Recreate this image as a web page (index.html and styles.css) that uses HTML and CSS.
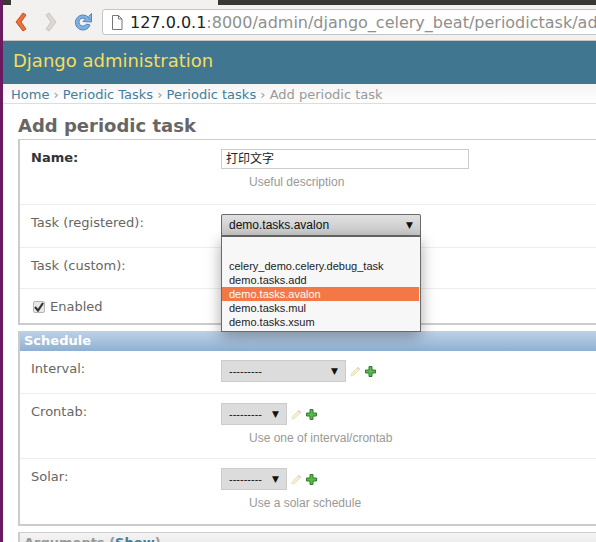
FILE: index.html
```html
<!doctype html>
<html>
  <head>
    <meta charset="utf-8">
    <title>Add periodic task | Django site admin</title>
    <link rel="stylesheet" href="styles.css">
  </head>
  <body>
    <div class="launcher"></div>
    <div class="window">
      <div class="tabstrip"><div class="tab"></div></div>
      <div class="toolbar">
        <svg class="nav" width="18" height="26" viewBox="0 0 18 26">
          <path d="M12 4 L5 13 L12 22 L15 20 L10 13 L15 6 Z" fill="#e8703a" stroke="#c9521e" stroke-width="1"/>
        </svg>
        <svg class="nav nav-fwd" width="18" height="26" viewBox="0 0 18 26">
          <path d="M6 4 L13 13 L6 22 L3 20 L8 13 L3 6 Z" fill="#dbd8d5" stroke="#c8c5c2" stroke-width="1"/>
        </svg>
        <svg class="nav nav-reload" width="20" height="22" viewBox="0 0 20 22">
          <path d="M17 9 A7.5 7.5 0 1 0 17 14 L13.5 13 A4 4 0 1 1 12.5 8 L10 10.5 L18.5 11 L18.5 2.5 L15.5 5.5" fill="#7fb0e0" stroke="#4c86c4" stroke-width="1"/>
        </svg>
        <div class="urlbar">
          <svg width="12" height="15" viewBox="0 0 12 15">
            <path d="M1.5 .5 H7.5 L11 4 V14.5 H1.5 Z M7.5 .5 V4 H11" fill="#fff" stroke="#777"/>
          </svg>
          <span class="host">127.0.0.1</span><span class="path">:8000/admin/django_celery_beat/periodictask/add/</span>
        </div>
      </div>

      <div class="branding">Django administration</div>
      <div class="breadcrumbs">
        <a>Home</a> › <a>Periodic Tasks</a> › <a>Periodic tasks</a> › Add periodic task
      </div>

      <div class="content">
        <h1>Add periodic task</h1>

        <fieldset class="module">
          <div class="row row-name">
            <label class="required">Name:</label>
            <div class="field">
              <div class="textinput">打印文字</div>
              <p class="help">Useful description</p>
            </div>
          </div>
          <div class="row row-registered">
            <label>Task (registered):</label>
            <div class="field">
              <div class="dropdown">
                <div class="dropdown-btn">demo.tasks.avalon<span class="arrow">▼</span></div>
                <ul class="dropdown-list">
                  <li>&nbsp;</li>
                  <li>celery_demo.celery.debug_task</li>
                  <li>demo.tasks.add</li>
                  <li class="selected">demo.tasks.avalon</li>
                  <li>demo.tasks.mul</li>
                  <li>demo.tasks.xsum</li>
                </ul>
              </div>
            </div>
          </div>
          <div class="row row-custom">
            <label>Task (custom):</label>
          </div>
          <div class="row row-enabled">
            <span class="checkbox">
              <svg width="10" height="10" viewBox="0 0 10 10"><path d="M1 5 L4 8.5 L9 1" fill="none" stroke="#333" stroke-width="2.2"/></svg>
            </span>
            <label>Enabled</label>
          </div>
        </fieldset>

        <fieldset class="module">
          <h2>Schedule</h2>
          <div class="row row-interval">
            <label>Interval:</label>
            <div class="field">
              <div class="fk">
                <div class="select select-wide">---------<span class="arrow">▼</span></div>
                <svg class="icon" width="11" height="11" viewBox="0 0 11 11"><path d="M1 10 L1.5 7.5 L7.5 1.5 L9.5 3.5 L3.5 9.5 Z" fill="#f7efc8" stroke="#e4dcc0" stroke-width=".8"/><path d="M7.5 1.5 L9.5 3.5" stroke="#f0bfe0" stroke-width="1.6"/></svg>
                <svg class="icon" width="11" height="11" viewBox="0 0 11 11"><path d="M4 .5 H7 V4 H10.5 V7 H7 V10.5 H4 V7 H.5 V4 H4 Z" fill="#5fb54f" stroke="#2f7d2f"/></svg>
              </div>
            </div>
          </div>
          <div class="row row-crontab">
            <label>Crontab:</label>
            <div class="field">
              <div class="fk">
                <div class="select">---------<span class="arrow">▼</span></div>
                <svg class="icon" width="11" height="11" viewBox="0 0 11 11"><path d="M1 10 L1.5 7.5 L7.5 1.5 L9.5 3.5 L3.5 9.5 Z" fill="#f7efc8" stroke="#e4dcc0" stroke-width=".8"/><path d="M7.5 1.5 L9.5 3.5" stroke="#f0bfe0" stroke-width="1.6"/></svg>
                <svg class="icon" width="11" height="11" viewBox="0 0 11 11"><path d="M4 .5 H7 V4 H10.5 V7 H7 V10.5 H4 V7 H.5 V4 H4 Z" fill="#5fb54f" stroke="#2f7d2f"/></svg>
              </div>
              <p class="help">Use one of interval/crontab</p>
            </div>
          </div>
          <div class="row row-solar">
            <label>Solar:</label>
            <div class="field">
              <div class="fk">
                <div class="select">---------<span class="arrow">▼</span></div>
                <svg class="icon" width="11" height="11" viewBox="0 0 11 11"><path d="M1 10 L1.5 7.5 L7.5 1.5 L9.5 3.5 L3.5 9.5 Z" fill="#f7efc8" stroke="#e4dcc0" stroke-width=".8"/><path d="M7.5 1.5 L9.5 3.5" stroke="#f0bfe0" stroke-width="1.6"/></svg>
                <svg class="icon" width="11" height="11" viewBox="0 0 11 11"><path d="M4 .5 H7 V4 H10.5 V7 H7 V10.5 H4 V7 H.5 V4 H4 Z" fill="#5fb54f" stroke="#2f7d2f"/></svg>
              </div>
              <p class="help">Use a solar schedule</p>
            </div>
          </div>
        </fieldset>

        <fieldset class="module collapsed">
          <h2>Arguments (<a>Show</a>)</h2>
        </fieldset>
      </div>
    </div>
  </body>
</html>
```

FILE: styles.css
```css
html, body {
  margin: 0;
  padding: 0;
  height: 100%;
  overflow: hidden;
}

body {
  display: flex;
  font-family: 'DejaVu Sans', sans-serif;
  font-size: 13px;
  background: #fff;
  color: #666;
}

a {
  color: #447e9b;
}

.launcher {
  flex: none;
  width: 3px;
  background: #6b1a5f;
}

.window {
  flex: none;
  width: 700px;
}

/* browser chrome */
.tabstrip {
  height: 5px;
  background: #3a3833;
}
.tab {
  width: 207px;
  height: 5px;
  margin-left: 8px;
  background: #f2f1f0;
}

.toolbar {
  display: flex;
  align-items: center;
  height: 36px;
  box-sizing: border-box;
  padding: 0 0 1px 8px;
  background: #f2f1f0;
  border-bottom: 1px solid #c9c7c4;
}
.nav {
  flex: none;
}
.nav-fwd {
  margin-left: 14px;
}
.nav-reload {
  margin-left: 12px;
}
.urlbar {
  display: flex;
  align-items: center;
  height: 26px;
  box-sizing: border-box;
  width: 600px;
  margin-left: 9px;
  padding-left: 8px;
  background: #fff;
  border: 1px solid #c4c4c4;
  border-radius: 3px 0 0 3px;
  font-size: 16px;
}
.urlbar svg {
  margin-right: 7px;
}
.host {
  color: #222;
}
.path {
  color: #8f8f8f;
}

/* admin header */
.branding {
  height: 43px;
  box-sizing: border-box;
  padding: 8px 10px;
  background: #417690;
  color: #f5dd5d;
  font-size: 18px;
  line-height: 24px;
}

.breadcrumbs {
  height: 20px;
  box-sizing: border-box;
  padding: 3px 8px;
  background: linear-gradient(#f4f4f4, #fff);
  border-bottom: 1px solid #ddd;
  color: #999;
  font-size: 13px;
  line-height: 16px;
}

.content {
  padding: 11px 0 0 15px;
}

h1 {
  margin: 0 0 2px;
  color: #666;
  font-size: 18px;
  line-height: 22px;
  font-weight: bold;
}

.module {
  margin: 0 0 6px;
  padding: 0;
  border: 0;
  border-top: 1px solid #ccc;
  border-left: 2px solid #ccc;
  border-bottom: 2px solid #ccc;
}

.module h2 {
  margin: 0;
  height: 19px;
  padding: 0 4px;
  background: linear-gradient(#bcd0e6, #8fb0d2);
  color: #fff;
  font-size: 13px;
  line-height: 18px;
}

.row {
  display: flex;
  box-sizing: border-box;
  padding: 10px 11px;
  border-bottom: 1px solid #eee;
  line-height: 16px;
}
.row:last-child {
  border-bottom: 0;
}
.row > label {
  flex: none;
  width: 190px;
}
.row-name {
  height: 65px;
}
.row-registered {
  height: 43px;
}
.row-custom {
  height: 41px;
}
.row-enabled {
  height: 34px;
  align-items: flex-start;
}
.row-interval {
  height: 43px;
}
.row-crontab {
  height: 65px;
}
.row-solar {
  height: 65px;
}

.required {
  color: #333;
  font-weight: bold;
}

.field {
  margin-top: -1px;
}

.help {
  margin: 6px 0 0 28px;
  color: #999;
  font-family: 'Liberation Sans', sans-serif;
  font-size: 12px;
  line-height: 14px;
}

.textinput {
  width: 248px;
  height: 20px;
  box-sizing: border-box;
  padding-left: 4px;
  border: 1px solid #ccc;
  color: #222;
  font-family: 'Liberation Sans', 'Noto Sans CJK SC', sans-serif;
  font-size: 12px;
  line-height: 18px;
}

/* open select */
.dropdown {
  position: relative;
  width: 200px;
}
.dropdown-btn {
  display: flex;
  align-items: center;
  justify-content: space-between;
  height: 23px;
  box-sizing: border-box;
  padding: 0 7px;
  background: linear-gradient(#e0e0e0, #c8c8c8);
  border: 1px solid #6a6a6a;
  border-bottom-width: 2px;
  border-radius: 2px 2px 0 0;
  color: #111;
  font-family: 'Liberation Sans', sans-serif;
  font-size: 12px;
}
.arrow {
  color: #111;
  font-family: 'DejaVu Sans', sans-serif;
  font-size: 9px;
}
.dropdown-list {
  position: absolute;
  top: 23px;
  left: 0;
  width: 100%;
  box-sizing: border-box;
  margin: 0;
  padding: 8px 1px 2px 0;
  list-style: none;
  background: #f7f7f7;
  border: 1px solid #6a6a6a;
  border-top: 0;
  box-shadow: 0 4px 14px rgba(0, 0, 0, .35);
  color: #222;
  font-family: 'Liberation Sans', sans-serif;
  font-size: 11px;
  line-height: 14px;
}
.dropdown-list li {
  padding-left: 7px;
}
.dropdown-list .selected {
  background: #f37846;
  color: #fff;
}

.fk {
  display: flex;
  align-items: center;
  gap: 4px;
}
.select {
  display: flex;
  align-items: center;
  justify-content: space-between;
  width: 66px;
  height: 22px;
  box-sizing: border-box;
  padding: 0 7px;
  background: #dcdcdc;
  border: 1px solid #ccc;
  color: #111;
  font-family: 'Liberation Sans', sans-serif;
  font-size: 11px;
}
.select-wide {
  width: 125px;
}

.checkbox {
  display: flex;
  align-items: center;
  justify-content: center;
  width: 12px;
  height: 12px;
  box-sizing: border-box;
  margin: 2px 5px 0 2px;
  background: #e8e8e8;
  border: 1px solid #b5b5b5;
  border-radius: 2px;
}

.collapsed {
  border-bottom: 0;
}
.collapsed h2 {
  background: linear-gradient(#f4f4f4, #e6e6e6);
  color: #999;
  line-height: 20px;
}
.collapsed h2 a {
  color: #447e9b;
}
```
